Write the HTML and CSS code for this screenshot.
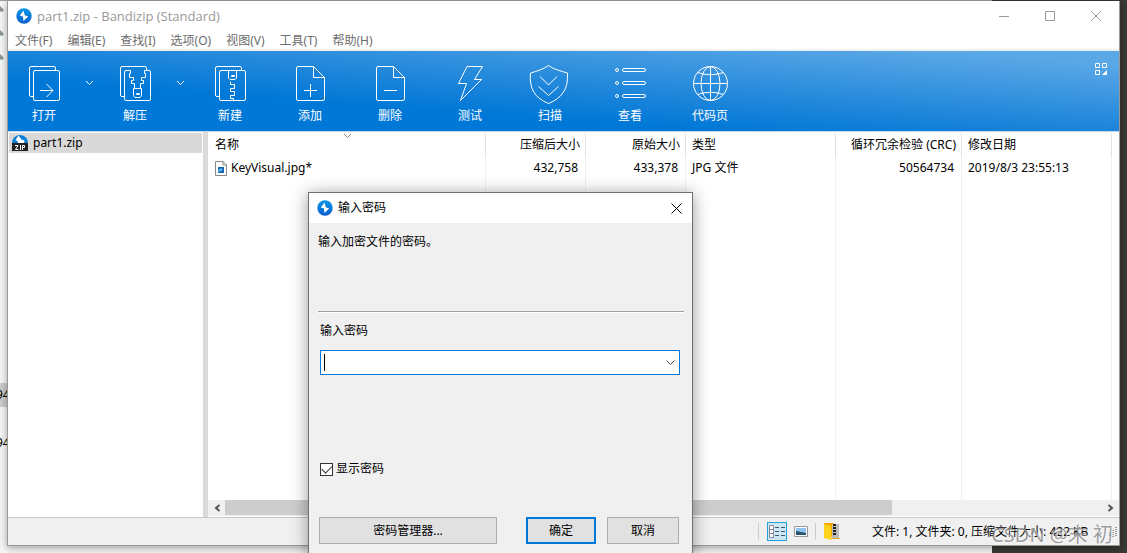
FILE: index.html
```html
<!DOCTYPE html>
<html lang="zh-CN">
<head>
<meta charset="utf-8">
<title>part1.zip - Bandizip (Standard)</title>
<link rel="stylesheet" href="styles.css">
</head>
<body>
<svg class="defs" aria-hidden="true">
  <defs>
    <linearGradient id="blue" x1="0" y1="0" x2="0" y2="1"><stop offset="0" stop-color="#0a96e8"/><stop offset="1" stop-color="#0b5fcc"/></linearGradient>
    <symbol id="logo" viewBox="0 0 16 16"><circle cx="8" cy="8" r="7.7" fill="url(#blue)"/><path d="M7.500 2.500 3.800 7.500 7 8.500 7.400 13 12.200 8.400 8.800 7.200Z" fill="#fff"/></symbol>
    <symbol id="pin" viewBox="0 0 8 10"><path d="M0 1 3 0 7 4 5 6 2 5 0 8Z" fill="#8a949c"/></symbol>
  </defs>
</svg>

<div class="desktop" aria-hidden="true">
  <div class="explorer">
    <svg class="pin"><use href="#pin"/></svg>
    <svg class="pin"><use href="#pin"/></svg>
    <svg class="pin"><use href="#pin"/></svg>
    <span class="entry entry-selected">94</span>
    <span class="entry">94</span>
  </div>
</div>

<main class="window">
  <header class="titlebar">
    <svg class="logo"><use href="#logo"/></svg>
    <h1 class="title">part1.zip - Bandizip (Standard)</h1>
    <button class="caption" aria-label="最小化"><svg width="10" height="10"><path d="M0 5.5H10"/></svg></button>
    <button class="caption" aria-label="最大化"><svg width="10" height="10"><path d="M.5.5H9.5V9.5H.5Z"/></svg></button>
    <button class="caption" aria-label="关闭"><svg width="10" height="10"><path d="M0 0 10 10M10 0 0 10"/></svg></button>
  </header>

  <nav class="menubar">
    <button>文件(F)</button><button>编辑(E)</button><button>查找(I)</button><button>选项(O)</button><button>视图(V)</button><button>工具(T)</button><button>帮助(H)</button>
  </nav>

  <div class="toolbar">
    <button class="tool tool-split"><svg class="icon"><path d="M9.5 32.5H7a1.5 1.5 0 0 1-1.5-1.5V4A1.5 1.5 0 0 1 7 2.5H30A1.5 1.5 0 0 1 31.5 4V6.500"/><rect x="9.500" y="6.500" width="26" height="30" rx="1.500"/><path d="M16 26.500H29M22.500 20 29 26.500 22.500 33"/></svg><span>打开</span></button>
    <button class="more" aria-label="打开选项"><svg width="9" height="6"><path d="M1 1 4.500 4.500 8 1"/></svg></button>
    <button class="tool tool-split"><svg class="icon"><path d="M9.500 32.500H7a1.500 1.500 0 0 1-1.500-1.500V4A1.500 1.500 0 0 1 7 2.500H30A1.500 1.500 0 0 1 31.500 4V6.500"/><path d="M15.500 6.500H11A1.500 1.500 0 0 0 9.500 8V35A1.500 1.500 0 0 0 11 36.500H34A1.500 1.500 0 0 0 35.500 35V8A1.500 1.500 0 0 0 34 6.500H29.500"/><path d="M15.500 6.500V9.500H14.500V13.500H18.500V16.500H16.500V19.500H19.500V24.500M29.500 6.500V9.500H30.500V13.500H26.500V16.500H28.500V19.500H25.500V24.500"/><path d="M18.500 24.500H26.500V31.500L25 33.500H20L18.500 31.500ZM21.500 29.500H24.500V30.500H21.500Z"/></svg><span>解压</span></button>
    <button class="more" aria-label="解压选项"><svg width="9" height="6"><path d="M1 1 4.500 4.500 8 1"/></svg></button>
    <button class="tool"><svg class="icon"><path d="M9.500 32.500H7a1.500 1.500 0 0 1-1.500-1.500V4A1.500 1.500 0 0 1 7 2.500H30A1.500 1.500 0 0 1 31.500 4V6.500"/><rect x="9.500" y="6.500" width="26" height="30" rx="1.500"/><path d="M18.500 6.500V14L20 15.500H25L26.500 14V6.500M21.500 11.500H24.500V12.500H21.500ZM20.500 17.500V20.500H24.500V24.500H20.500V27.500H24.500V31.500H20.500V34.500H23.500V36.500"/></svg><span>新建</span></button>
    <button class="tool"><svg class="icon"><path d="M23.500 2.500H8A1.500 1.500 0 0 0 6.500 4V35A1.500 1.500 0 0 0 8 36.500H33A1.500 1.500 0 0 0 34.500 35V13.500ZM23.500 2.500V13.500H34.500M20.500 20V33M14 26.500H27"/></svg><span>添加</span></button>
    <button class="tool"><svg class="icon"><path d="M23.500 2.500H8A1.500 1.500 0 0 0 6.500 4V35A1.500 1.500 0 0 0 8 36.500H33A1.500 1.500 0 0 0 34.500 35V13.500ZM23.500 2.500V13.500H34.500M14 26.500H27"/></svg><span>删除</span></button>
    <button class="tool"><svg class="icon"><path d="M17 2.500H32.500L24.500 15.500H31.500L10.500 36.500 16.500 19.500H8.500Z"/></svg><span>测试</span></button>
    <button class="tool"><svg class="icon"><path d="M18.500 1.500C13 5.500 7 7 .5 9-1 25 5 34 18.500 39.500 32 34 38.500 25 37.500 9 30.500 7 24 5.500 18.500 1.500ZM10 12.500 18.500 21 27 12.500M8.500 22.500 18.500 31.500 28.500 22.500"/></svg><span>扫描</span></button>
    <button class="tool"><svg class="icon"><circle cx="7" cy="6" r="1.500"/><circle cx="7" cy="19" r="1.500"/><circle cx="7" cy="32" r="1.500"/><rect x="12.500" y="4.500" width="23" height="3" rx="1.500"/><rect x="12.500" y="17.500" width="23" height="3" rx="1.500"/><rect x="12.500" y="30.500" width="23" height="3" rx="1.500"/></svg><span>查看</span></button>
    <button class="tool"><svg class="icon"><circle cx="20.500" cy="19.500" r="17"/><ellipse cx="20.500" cy="19.500" rx="9.500" ry="17"/><path d="M20.500 2.500V36.500M3.500 19.500H37.500M7.500 8.500Q20.500 13 33.500 8.500M7.500 30.500Q20.500 26 33.500 30.500"/></svg><span>代码页</span></button>
    <button class="layout" aria-label="布局"><svg width="12" height="12"><path d="M.5.5H4.500V4.500H.5ZM7.500.5H11.500V4.500H7.500ZM.5 7.500H4.500V11.500H.5Z"/><path d="M12 7V12H7Z" fill="#fff" stroke="none"/></svg></button>
  </div>

  <div class="content">
    <aside class="tree">
      <a class="node" href="#"><svg width="16" height="16" viewBox="0 0 16 16"><path d="M0 8A8 8 0 0 1 16 8V9H0Z" fill="#0b80d8"/><path d="M6.500.5 3.500 5 5.500 6 6 8H12L12.500 5.500 9.500 4.500Z" fill="#fff"/><path d="M0 8H16V16H0Z" fill="#222"/><path d="M3 10.500H6L3.500 14.500H6.500M8.500 10V15M10.500 15V10.500H12.500V12.500H10.500" fill="none" stroke="#fff"/></svg>part1.zip</a>
    </aside>

    <section class="files">
      <svg class="sort" width="9" height="6" aria-hidden="true"><path d="M1 1 4.500 4.500 8 1"/></svg>
      <div class="table-area">
        <table>
          <colgroup><col><col class="c-size"><col class="c-size"><col class="c-type"><col class="c-crc"><col class="c-type"></colgroup>
          <thead><tr><th>名称</th><th class="num">压缩后大小</th><th class="num">原始大小</th><th>类型</th><th class="num">循环冗余检验 (CRC)</th><th>修改日期</th></tr></thead>
          <tbody>
            <tr class="row"><td><span class="file"><svg width="12" height="15"><path d="M.5.5H8L11.500 4V14.500H.5Z" fill="#fff" stroke="#888"/><path d="M8 .5V4H11.500" fill="none" stroke="#888"/><path d="M3 6H9V12H3Z" fill="#1765b5"/><path d="M3 9 6 7 8 9 6 10 3 11Z" fill="#53b4ee"/></svg>KeyVisual.jpg*</span></td><td class="num">432,758</td><td class="num">433,378</td><td>JPG 文件</td><td class="num">50564734</td><td>2019/8/3 23:55:13</td></tr>
            <tr><td></td><td></td><td></td><td></td><td></td><td></td></tr>
          </tbody>
        </table>
      </div>
      <div class="scrollbar">
        <button aria-label="向左"><svg width="7" height="8"><path d="M5.500 1 2 4 5.500 7"/></svg></button>
        <div class="track"><div class="thumb"></div></div>
        <button aria-label="向右"><svg width="7" height="8"><path d="M1.500 1 5 4 1.500 7"/></svg></button>
      </div>
    </section>
  </div>

  <footer class="status">
    <span class="divider"></span>
    <button class="view view-active" aria-label="详细信息"><svg width="16" height="14"><path d="M.5.5H4.500V12.500H.5ZM.5 4.500H4.500M.5 8.500H4.500" fill="#fff" stroke="#889"/><path d="M6 2.500H10M12 2.500H16M6 6.500H10M12 6.500H16M6 10.500H10M12 10.500H16" stroke="#456"/></svg></button>
    <button class="view" aria-label="图片"><svg width="14" height="11"><path d="M.5.5H13.500V10.500H.5Z" fill="#fff" stroke="#999"/><path d="M2 2H12V9H2Z" fill="#8fc3ef"/><path d="M2 5 7 6 12 7V9H2Z" fill="#28536c"/></svg></button>
    <span class="divider"></span>
    <svg class="folder" width="16" height="17"><path d="M0 0H10V14H0Z" fill="#f5a900"/><path d="M0 1 7 3V17L0 15Z" fill="#ffd21c"/><path d="M8 1H15V15H8Z" fill="#bbb"/><path d="M10.500 1V13" stroke="#222" stroke-width="3" stroke-dasharray="2 1"/><path d="M7 15.500H16" stroke="#e6a91c"/></svg>
    <span class="summary">文件: 1, 文件夹: 0, 压缩文件大小: 422 KB</span>
    <svg class="grip" width="10" height="10"><path d="M8 0V10M5 3V10M2 6V10" stroke="#999" stroke-width="2" stroke-dasharray="1 1"/></svg>
  </footer>
</main>

<span class="watermark">CSDN @末 初</span>

<section class="dialog" role="dialog" aria-labelledby="dialog-title">
  <header class="dialog-head">
    <svg class="logo"><use href="#logo"/></svg>
    <h2 class="dialog-title" id="dialog-title">输入密码</h2>
    <button class="dialog-close" aria-label="关闭"><svg width="11" height="11"><path d="M.5.5 10.500 10.500M10.500.5.5 10.500"/></svg></button>
  </header>
  <form class="dialog-body">
    <p class="message">输入加密文件的密码。</p>
    <label class="field-label" for="password">输入密码</label>
    <div class="combo">
      <span class="caret"></span>
      <input id="password" type="text">
      <button type="button" aria-label="历史密码"><svg width="9" height="6"><path d="M.5.5 4.500 4.500 8.500.5"/></svg></button>
    </div>
    <label class="check"><input type="checkbox" checked>显示密码</label>
    <div class="actions">
      <button type="button" class="btn btn-manager">密码管理器...</button>
      <button type="submit" class="btn btn-ok">确定</button>
      <button type="button" class="btn">取消</button>
    </div>
  </form>
</section>
</body>
</html>
```

FILE: styles.css
```css
* { box-sizing: border-box; }

body {
  margin: 0;
  height: 100vh;
  padding: 1px 7px 7px;
  display: flex;
  overflow: hidden;
  background: #3a3835;
  font: 12px/16px "Noto Sans", "Noto Sans CJK SC", sans-serif;
  color: #000;
}

button, input { font: inherit; color: inherit; }

button {
  margin: 0;
  padding: 0;
  border: 0;
  background: none;
}

svg { display: block; flex: none; }
h1, h2, p { margin: 0; font: inherit; }
.defs { position: absolute; width: 0; height: 0; }

/* desktop behind the window */
.desktop {
  position: absolute;
  inset: 0;
  z-index: -1;
}

.explorer {
  width: 88%;
  height: 100%;
  padding-top: 5px;
  background: #f7f7f7;
  border-top: 1px solid #a0a0a0;
}

.pin {
  width: 8px;
  height: 10px;
  margin: 0 0 14px -3px;
}

.entry {
  display: block;
  width: 8px;
  height: 24px;
  margin-top: 24px;
  line-height: 24px;
  text-indent: -4px;
  overflow: hidden;
}

.entry-selected { margin-top: 319px; background: #ccc; }

/* main window */
.window {
  flex: 1;
  min-width: 0;
  display: flex;
  flex-direction: column;
  border: 1px solid #999;
  border-top: 0;
  background: #fff;
  box-shadow: 0 2px 8px rgba(0, 0, 0, .35);
}

.logo { width: 16px; height: 16px; }

.titlebar {
  display: flex;
  align-items: center;
  height: 29px;
  padding-left: 8px;
  color: #999;
}

.title {
  flex: 1;
  margin-left: 5px;
  font-family: "Open Sans", "Noto Sans CJK SC", sans-serif;
  font-size: 13px;
}

.caption {
  width: 46px;
  height: 29px;
  display: grid;
  place-items: center;
}

.caption svg { fill: none; stroke: #999; }

.menubar {
  display: flex;
  gap: 15px;
  height: 21px;
  padding: 2px 7px 0;
  border-bottom: 2px solid #f0f0f0;
  color: #6d6d6d;
}

.toolbar {
  display: flex;
  height: 81px;
  border-bottom: 1px solid #c4d8e8;
  background: linear-gradient(to top right, #0078d7 32%, #1b84da 50%, #5ba8e6 92%);
  color: #fff;
}

.tool {
  width: 80px;
  padding-top: 13px;
  display: flex;
  flex-direction: column;
  align-items: center;
  gap: 4px;
}

.tool-split { width: 72px; }
.icon { width: 40px; height: 40px; overflow: visible; }

.toolbar svg {
  fill: none;
  stroke: #fff;
}

.more {
  width: 19px;
  height: 64px;
  display: grid;
  place-items: center;
}

.layout { margin: 12px 12px auto auto; }

.content {
  flex: 1;
  min-height: 0;
  display: flex;
}

.tree {
  width: 200px;
  padding: 1px;
  border-right: 5px solid #dadada;
}

.node {
  display: flex;
  align-items: center;
  gap: 5px;
  height: 20px;
  padding-left: 3px;
  background: #d9d9d9;
  color: #000;
  text-decoration: none;
}

.files {
  position: relative;
  flex: 1;
  min-width: 0;
  display: flex;
  flex-direction: column;
}

.sort {
  position: absolute;
  left: 135px;
  top: 1px;
  fill: none;
  stroke: #888;
}

.table-area {
  flex: 1;
  min-height: 0;
  padding: 1px 7px 0 0;
}

table {
  width: 100%;
  height: 100%;
  table-layout: fixed;
  border-collapse: separate;
  border-spacing: 0;
}

.c-size { width: 100px; }
.c-type { width: 150px; }
.c-crc { width: 126px; }

th, td {
  padding: 0 7px 0 6px;
  border-right: 1px solid #ebf2f9;
  text-align: left;
  font-weight: normal;
  white-space: nowrap;
}

th {
  height: 24px;
  padding: 0 5px 0 6px;
  border-color: #e2e2e2;
}

th:first-child, td:first-child { padding-left: 7px; }

.row td { height: 22px; }
th.num, td.num { text-align: right; }

.file {
  display: flex;
  align-items: center;
  gap: 4px;
}

.scrollbar {
  display: flex;
  height: 17px;
  padding: 0 1px 1px;
  background: #f0f0f0;
  border-bottom: 1px solid #fff;
}

.scrollbar button {
  width: 16px;
  display: grid;
  place-items: center;
}

.scrollbar svg {
  fill: none;
  stroke: #555;
  stroke-width: 2;
}

.track { flex: 1; }
.thumb { width: 76%; height: 15px; background: #cdcdcd; }

.status {
  display: flex;
  align-items: center;
  justify-content: flex-end;
  height: 28px;
  padding-right: 1px;
  border-top: 1px solid #c8c8c8;
  background: #f0f0f0;
}

.divider {
  width: 1px;
  height: 17px;
  margin: 0 8px;
  background: #ccc;
}

.view {
  width: 20px;
  height: 19px;
  margin-right: 4px;
  display: grid;
  place-items: center;
}

.view svg { fill: none; }
.view-active { background: #cce8f6; border: 1px solid #26a0da; }
.view + .divider { margin-left: 0; }
.summary { width: 226px; margin: 0 10px 0 32px; white-space: nowrap; }

.watermark {
  position: absolute;
  right: 14px;
  bottom: 4px;
  font-size: 20px;
  line-height: 28px;
  color: rgba(120, 120, 120, .7);
  text-shadow: 1px 1px 0 rgba(255, 255, 255, .7);
}

/* password dialog */
.dialog {
  position: absolute;
  left: 308px;
  top: 192px;
  width: 385px;
  border: 1px solid #707070;
  background: #f0f0f0;
  box-shadow: 0 2px 16px rgba(0, 0, 0, .4);
}

.dialog-head {
  display: flex;
  align-items: center;
  height: 30px;
  padding-left: 8px;
  background: #fff;
}

.dialog-title { flex: 1; margin-left: 5px; }

.dialog-close {
  width: 31px;
  height: 30px;
  display: grid;
  place-items: center;
}

.dialog-close svg { fill: none; stroke: #000; }

.dialog-body {
  display: flex;
  flex-direction: column;
  padding: 11px 8px 12px 9px;
}

.message {
  height: 79px;
  border-bottom: 1px solid #fff;
  box-shadow: inset 0 -1px #a0a0a0;
}

.field-label { margin: 10px 0 11px 2px; }

.combo {
  position: relative;
  display: flex;
  height: 25px;
  margin: 0 4px 0 2px;
  border: 1px solid #0078d7;
  background: #fff;
}

.combo input {
  flex: 1;
  min-width: 0;
  padding: 0 4px;
  border: 0;
  outline: 0;
  background: none;
}

.combo button {
  width: 17px;
  display: grid;
  place-items: center;
}

.combo svg { fill: none; stroke: #444; }

.caret {
  position: absolute;
  left: 3px;
  top: 3px;
  width: 1px;
  height: 17px;
  background: #000;
}

.check {
  display: flex;
  align-items: center;
  gap: 3px;
  margin: 86px 0 40px 2px;
}

.check input {
  appearance: none;
  width: 13px;
  height: 13px;
  margin: 0;
  border: 1px solid #333;
  background: #fff;
  display: grid;
  place-items: center;
}

.check input:checked::before {
  content: "";
  width: 9px;
  height: 5px;
  border: solid #333;
  border-width: 0 0 1px 1px;
  transform: translateY(-1px) rotate(-45deg);
}

.actions {
  display: flex;
  gap: 11px;
  padding: 0 5px 0 1px;
}

.btn {
  width: 72px;
  height: 27px;
  border: 1px solid #adadad;
  background: #e1e1e1;
}

.btn-manager { width: 178px; margin-right: auto; }
.btn-ok { width: 70px; border: 2px solid #0078d7; }
```
